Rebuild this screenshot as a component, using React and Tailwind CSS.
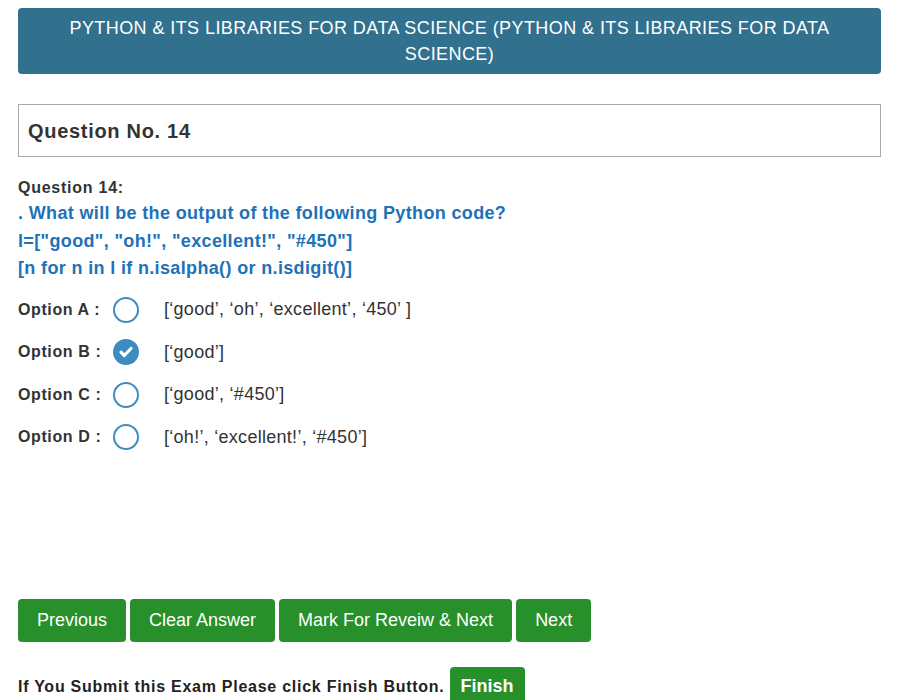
export default function App() {
  const options = [
    { key: 'A', text: '[‘good’, ‘oh’, ‘excellent’, ‘450’ ]', checked: false },
    { key: 'B', text: '[‘good’]', checked: true },
    { key: 'C', text: '[‘good’, ‘#450’]', checked: false },
    { key: 'D', text: '[‘oh!’, ‘excellent!’, ‘#450’]', checked: false },
  ];

  return (
    <div className="min-h-[700px] bg-white pl-[18px] pr-[17px] pt-[8px] font-['Liberation_Sans',Arial,sans-serif] text-[#333]">
      {/* Title bar */}
      <div className="rounded-[4px] bg-[#32718e] px-[40px] py-[7px] text-center text-[18px] leading-[26px] tracking-[0.42px] text-white">
        PYTHON &amp; ITS LIBRARIES FOR DATA SCIENCE (PYTHON &amp; ITS LIBRARIES FOR DATA SCIENCE)
      </div>

      {/* Question number box */}
      <div className="mt-[30px] flex h-[53px] items-center border border-[#aaa] px-[9px]">
        <span className="text-[20px] font-bold tracking-[0.7px] text-[#333]">Question No. 14</span>
      </div>

      {/* Question text */}
      <div className="mt-[21px] text-[16px] font-bold leading-[20px] tracking-[0.75px]">Question 14:</div>
      <div className="mt-[2px] text-[18px] font-bold leading-[27.5px] tracking-[0.35px] text-[#1d72b8]">
        <div>. What will be the output of the following Python code?</div>
        <div>l=["good", "oh!", "excellent!", "#450"]</div>
        <div>[n for n in l if n.isalpha() or n.isdigit()]</div>
      </div>

      {/* Options */}
      <div className="mt-[6px] flex flex-col">
        {options.map(o => (
          <div key={o.key} className="flex h-[42.5px] items-center">
            <span className="w-[95px] text-[16px] font-bold tracking-[0.6px] text-[#333]">Option {o.key} :</span>
            {o.checked ? (
              <span className="flex h-[26px] w-[26px] items-center justify-center rounded-full bg-[#3d8bbf]">
                <svg width="18" height="18" viewBox="0 0 18 18">
                  <path d="M4 9.2l3.3 3.3 6.7-7" fill="none" stroke="white" strokeWidth="3.2" strokeLinecap="round" strokeLinejoin="round" />
                </svg>
              </span>
            ) : (
              <span className="h-[26px] w-[26px] rounded-full border-2 border-[#3d8bbf]" />
            )}
            <span className="ml-[25px] text-[18px] tracking-[0.28px] text-[#333]">{o.text}</span>
          </div>
        ))}
      </div>

      {/* Nav buttons */}
      <div className="mt-[140px] flex gap-[4px]">
        {['Previous', 'Clear Answer', 'Mark For Reveiw & Next', 'Next'].map(label => (
          <button
            key={label}
            className="h-[43px] rounded-[4px] bg-[#27902b] px-[19px] text-[18px] text-white"
          >
            {label}
          </button>
        ))}
      </div>

      {/* Finish */}
      <div className="mt-[25px] flex items-center">
        <span className="text-[16px] font-bold tracking-[0.74px] text-[#222]">If You Submit this Exam Please click Finish Button.</span>
        <button className="ml-[5px] h-[40px] rounded-[4px] bg-[#27902b] px-[11px] text-[18px] font-bold text-white">
          Finish
        </button>
      </div>
    </div>
  );
}
